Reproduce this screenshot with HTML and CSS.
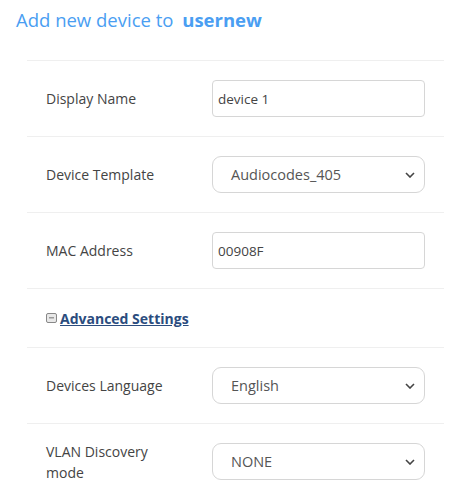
FILE: index.html
```html
<!DOCTYPE html>
<html>
<head>
<meta charset="utf-8">
<link rel="stylesheet" href="styles.css">
</head>
<body>
<h1 class="title">Add new device to <b class="user">usernew</b></h1>
<div class="form">
  <div class="row">
    <label class="label">Display Name</label>
    <div class="field"><input class="input" type="text" value="device 1"></div>
  </div>
  <div class="row">
    <label class="label">Device Template</label>
    <div class="field"><div class="select"><span>Audiocodes_405</span><svg class="chev" viewBox="0 0 10 6" width="10" height="6"><path d="M1 1l4 4 4-4" fill="none" stroke="#444" stroke-width="1.6"/></svg></div></div>
  </div>
  <div class="row">
    <label class="label">MAC Address</label>
    <div class="field"><input class="input" type="text" value="00908F"></div>
  </div>
  <div class="row adv">
    <a class="advlink" href="#"><span class="minus"></span>Advanced Settings</a>
  </div>
  <div class="row">
    <label class="label">Devices Language</label>
    <div class="field"><div class="select"><span>English</span><svg class="chev" viewBox="0 0 10 6" width="10" height="6"><path d="M1 1l4 4 4-4" fill="none" stroke="#444" stroke-width="1.6"/></svg></div></div>
  </div>
  <div class="row">
    <label class="label">VLAN Discovery<br>mode</label>
    <div class="field"><div class="select"><span>NONE</span><svg class="chev" viewBox="0 0 10 6" width="10" height="6"><path d="M1 1l4 4 4-4" fill="none" stroke="#444" stroke-width="1.6"/></svg></div></div>
  </div>
</div>
</body>
</html>
```
FILE: styles.css
```css
body {
  margin: 0;
  background: #fff;
  font-family: "Open Sans", "Noto Sans", sans-serif;
  color: #444;
}
.title {
  margin: 0;
  padding: 7px 0 0 16px;
  font-size: 18.5px;
  font-weight: 400;
  color: #4a9ef2;
  line-height: 26px;
  height: 52px;
  box-sizing: border-box;
}
.user {
  font-weight: 700;
  margin-left: 4px;
}
.form {
  margin: 8px 29px 0 27px;
}
.row {
  display: flex;
  align-items: center;
  border-top: 1px solid #efefef;
  padding: 19px 0 19px 19px;
  height: 76px;
  box-sizing: border-box;
}
.label {
  width: 166px;
  font-size: 14px;
  color: #444;
  line-height: 21px;
}
.field {
  width: 213px;
}
.input {
  display: block;
  width: 100%;
  height: 37px;
  box-sizing: border-box;
  border: 1px solid #d6d6d6;
  border-radius: 4px;
  padding: 0 5px;
  font-family: inherit;
  font-size: 13.5px;
  color: #444;
  outline: none;
}
.select {
  display: flex;
  align-items: center;
  justify-content: space-between;
  height: 37px;
  box-sizing: border-box;
  border: 1px solid #d6d6d6;
  border-radius: 9px;
  padding: 0 9px 0 18px;
  font-size: 14.5px;
  color: #555;
}
.adv {
  height: 59px;
}
.advlink {
  font-size: 14px;
  font-weight: 700;
  color: #2b4c7e;
  text-decoration: underline;
  display: inline-flex;
  align-items: center;
}
.minus {
  display: inline-block;
  width: 9px;
  height: 8px;
  border: 1px solid #888;
  border-radius: 2px;
  background: linear-gradient(#999, #999) center / 5px 1.5px no-repeat, #e8e8e8;
  margin-right: 3px;
}
```
